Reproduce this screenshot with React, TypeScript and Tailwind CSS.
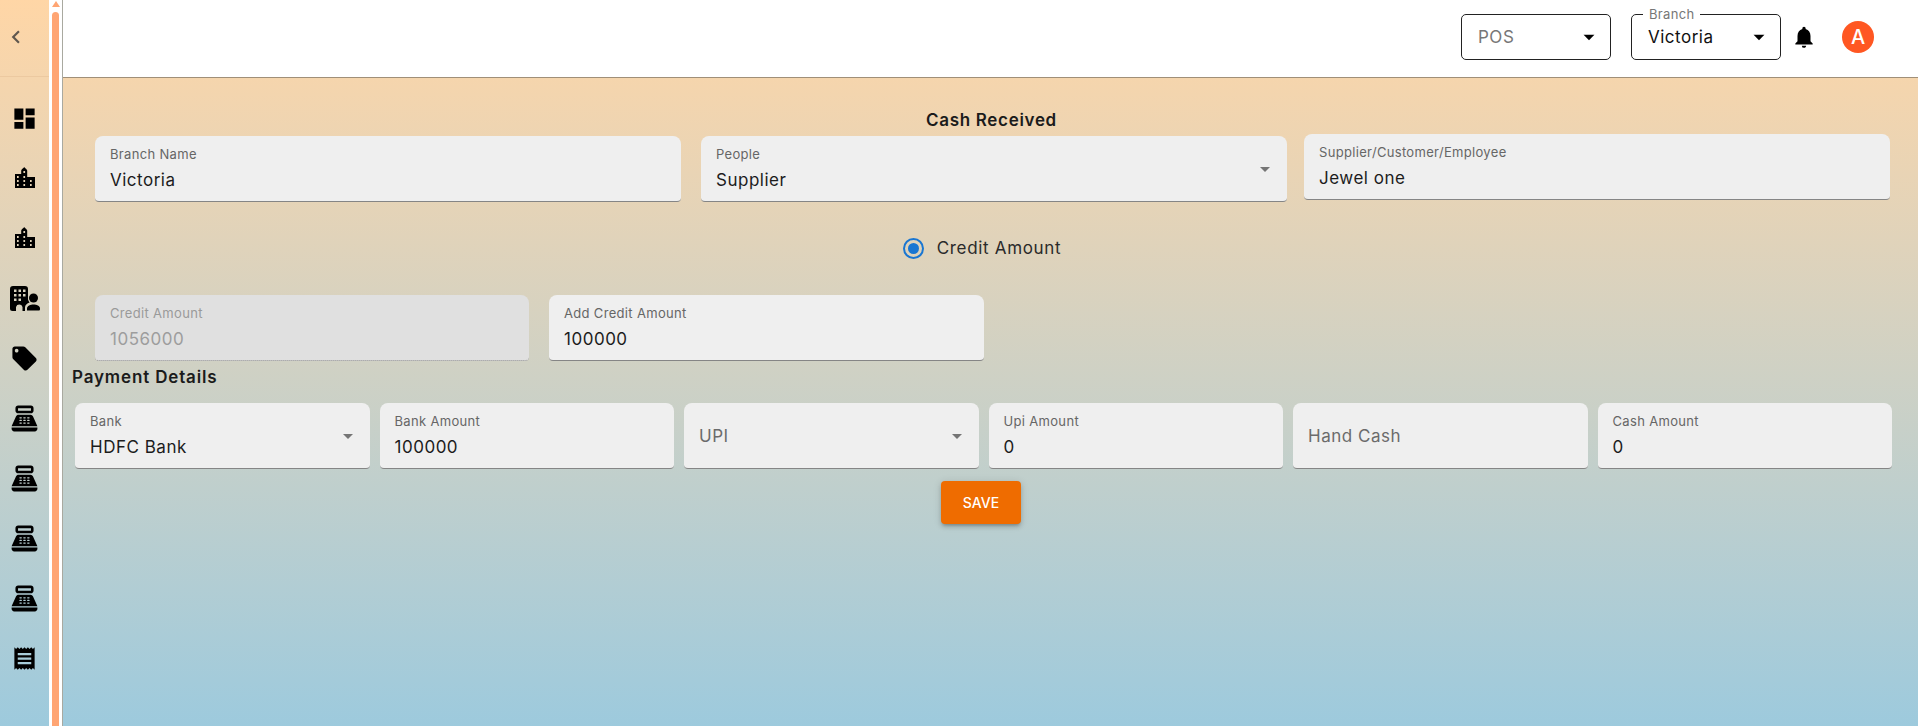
import { MdDashboard, MdLocalOffer, MdPointOfSale, MdReceipt, MdNotifications, MdChevronLeft, MdArrowDropDown } from "react-icons/md";

const FONT = "font-['Inter','Open_Sans',sans-serif]";

const City = () => (
  <svg viewBox="0 0 20 21" className="mb-[2px] h-[21px] w-5" fill="currentColor">
    <path
      fillRule="evenodd"
      d="M0 7h6.2V3.6C6.2 2.2 8.4 1.6 9.2 0c.8 1.6 3 2.2 3 3.6V10H20v11H0V7zM8.4 4v2h1.7V4H8.4zM2 9v2h1.7V9H2zm6.4 0v2h1.7V9H8.4zM2 13v2h1.7v-2H2zm6.4 0v2h1.7v-2H8.4zm6.6 0v2h1.7v-2H15zM2 17v2h1.7v-2H2zm6.4 0v2h1.7v-2H8.4zm6.6 0v2h1.7v-2H15z"
    />
  </svg>
);

// building with a person beside it
const BuildingPerson = () => (
  <svg viewBox="0 0 30 25" className="h-[25px] w-[30px]" fill="currentColor">
    <path
      fillRule="evenodd"
      d="M3 0h12a3 3 0 0 1 3 3v10.5c.4 1.2 1 2.3 1.6 3-2.6.9-4.6 2.6-4.6 5V25h-2.5v-4a3.4 3.4 0 0 0-6.5 0v4H2.5A2.5 2.5 0 0 1 0 22.500V3a3 3 0 0 1 3-3zM4 3.500v2.500h2.500V3.500H4zm4.500 0v2.500H11V3.500H8.500zm4.500 0v2.500h2.500V3.500H13zM4 8v2.500h2.500V8H4zm4.500 0v2.500H11V8H8.500zM13 8v2.500h2.500V8H13zM4 12.500V15h2.500v-2.500H4zm4.500 0V15H11v-2.500H8.500z"
    />
    <circle cx="23.500" cy="12" r="4.500" />
    <path d="M17 24.500v-2c0-2.600 3.500-4 6.500-4s6.500 1.400 6.500 4v.7c0 .8-.6 1.300-1.300 1.300H17z" />
  </svg>
);

const sideIcons = [
  <MdDashboard size={27} />,
  <City />,
  <City />,
  <BuildingPerson />,
  <MdLocalOffer size={29} />,
  <MdPointOfSale size={31} />,
  <MdPointOfSale size={31} />,
  <MdPointOfSale size={31} />,
  <MdPointOfSale size={31} />,
  <MdReceipt size={27} />,
];

type FieldProps = {
  label?: string;
  value?: string;
  placeholder?: string;
  select?: boolean;
  disabled?: boolean;
  className?: string;
};

const Field = ({ label, value, placeholder, select, disabled, className = "" }: FieldProps) => (
  <div
    className={`relative flex flex-col justify-center rounded-t-lg rounded-b-[4px] border-b px-[15px] h-[66px] ${
      disabled ? "bg-[#e0e0e0] border-dotted border-[#8a8a8a]" : "bg-[#efefef] border-[#858585]"
    } ${className}`}
  >
    {label && (
      <div className={`text-[13px] leading-4 mb-[6px] tracking-[0.025em] whitespace-nowrap ${disabled ? "text-[#9a9a9a]" : "text-[#666666]"}`}>
        {label}
      </div>
    )}
    {value && <div className={`text-[17px] leading-6 tracking-[0.03em] ${disabled ? "text-[#9d9d9d]" : "text-[#1c1c1c]"}`}>{value}</div>}
    {placeholder && <div className="text-[17px] leading-6 tracking-[0.03em] text-[#6b6b6b]">{placeholder}</div>}
    {select && <MdArrowDropDown size={24} className="absolute right-[10px] top-[21px] text-[#757575]" />}
  </div>
);

export default function App() {
  return (
    <div className={`${FONT} flex h-[726px] w-full overflow-hidden bg-gradient-to-b from-[#ffd6a6] to-[#9dcadd]`}>
      {/* Sidebar */}
      <aside className="flex w-[49px] shrink-0 flex-col items-center">
        <div className="flex h-[77px] w-full items-center justify-center border-b border-[#ecc9a0]">
          <MdChevronLeft size={28} className="-ml-[18px] pb-[2px] text-[#5f574e]" />
        </div>
        <div className="mt-[11px] flex flex-col items-center">
          {sideIcons.map((icon, i) => (
            <div key={i} className="flex h-[60px] w-full items-center justify-center text-black">
              {icon}
            </div>
          ))}
        </div>
      </aside>

      {/* Scrollbar */}
      <div className="flex w-[13px] shrink-0 flex-col items-center bg-white">
        <svg viewBox="0 0 8 6" className="mt-[1px] h-[6px] w-[8px] fill-[#ffa573]">
          <path d="M4 0l4 6H0z" />
        </svg>
        <div className="mt-[5px] w-[7px] flex-1 rounded-t-full bg-[#ffa573]" />
      </div>

      {/* Main */}
      <main className="flex min-w-0 flex-1 flex-col border-l border-[#a9a9a0]">
        <header className="flex h-[78px] shrink-0 items-center justify-end border-b border-[#a08f78] bg-white pb-[4px]">
          <div className="relative flex h-[46px] w-[150px] items-center justify-between rounded-[5px] border border-[#222222] pl-[16px] pr-[8px]">
            <span className="pt-[2px] text-[17px] tracking-[0.03em] text-[#777777]">POS</span>
            <MdArrowDropDown size={26} className="text-black" />
          </div>
          <div className="relative ml-[20px] flex h-[46px] w-[150px] items-center justify-between rounded-[5px] border border-[#222222] pl-[16px] pr-[8px]">
            <span className="absolute -top-[9px] left-[11px] bg-white px-[6px] text-[13px] leading-4 tracking-[0.025em] text-[#777777]">Branch</span>
            <span className="pt-[2px] text-[17px] tracking-[0.03em] text-[#111111]">Victoria</span>
            <MdArrowDropDown size={26} className="text-black" />
          </div>
          <MdNotifications size={26} className="ml-[10px] text-black" />
          <div className="ml-[25px] mr-[44px] flex h-8 w-8 items-center justify-center rounded-full bg-[#ff5722] text-[20px] font-medium text-white">
            A
          </div>
        </header>

        <div className="flex flex-col pl-[9px] pr-[26px]">
          <h2 className="mt-[32px] h-[26px] pl-[19px] text-center text-[17px] font-semibold leading-5 tracking-[0.04em] text-[#1b1b1b]">Cash Received</h2>

          <div className="flex items-start pl-[23px]">
            <Field label="Branch Name" value="Victoria" className="w-[586px]" />
            <Field label="People" value="Supplier" select className="ml-[20px] w-[586px]" />
            <Field label="Supplier/Customer/Employee" value="Jewel one" className="ml-[17px] -mt-[2px] w-[586px]" />
          </div>

          <div className="mt-[33px] flex h-[26px] items-center justify-center">
            <span className="flex h-[21px] w-[21px] items-center justify-center rounded-full border-2 border-[#1976d2]">
              <span className="h-[11px] w-[11px] rounded-full bg-[#1976d2]" />
            </span>
            <span className="ml-[13px] pt-[2px] text-[17px] tracking-[0.04em] text-[#2a2a2a]">Credit Amount</span>
          </div>

          <div className="mt-[34px] flex pl-[23px]">
            <Field label="Credit Amount" value="1056000" disabled className="w-[434px]" />
            <Field label="Add Credit Amount" value="100000" className="ml-[20px] w-[435px]" />
          </div>

          <h3 className="mt-[5px] h-[37px] pt-[1px] text-[17px] font-semibold leading-5 tracking-[0.05em] text-[#1b1b1b]">Payment Details</h3>

          <div className="grid grid-cols-6 gap-x-[10px] pl-[3px]">
            <Field label="Bank" value="HDFC Bank" select />
            <Field label="Bank Amount" value="100000" />
            <Field placeholder="UPI" select />
            <Field label="Upi Amount" value="0" />
            <Field placeholder="Hand Cash" />
            <Field label="Cash Amount" value="0" />
          </div>

          <div className="mt-[12px] flex justify-center pr-[2px]">
            <button className="h-[43px] w-[80px] rounded bg-[#ef6c00] text-[14px] font-medium text-white shadow-[0_3px_3px_-2px_rgba(0,0,0,0.2),0_3px_4px_0_rgba(0,0,0,0.14),0_1px_8px_0_rgba(0,0,0,0.12)]">
              SAVE
            </button>
          </div>
        </div>
      </main>
    </div>
  );
}
